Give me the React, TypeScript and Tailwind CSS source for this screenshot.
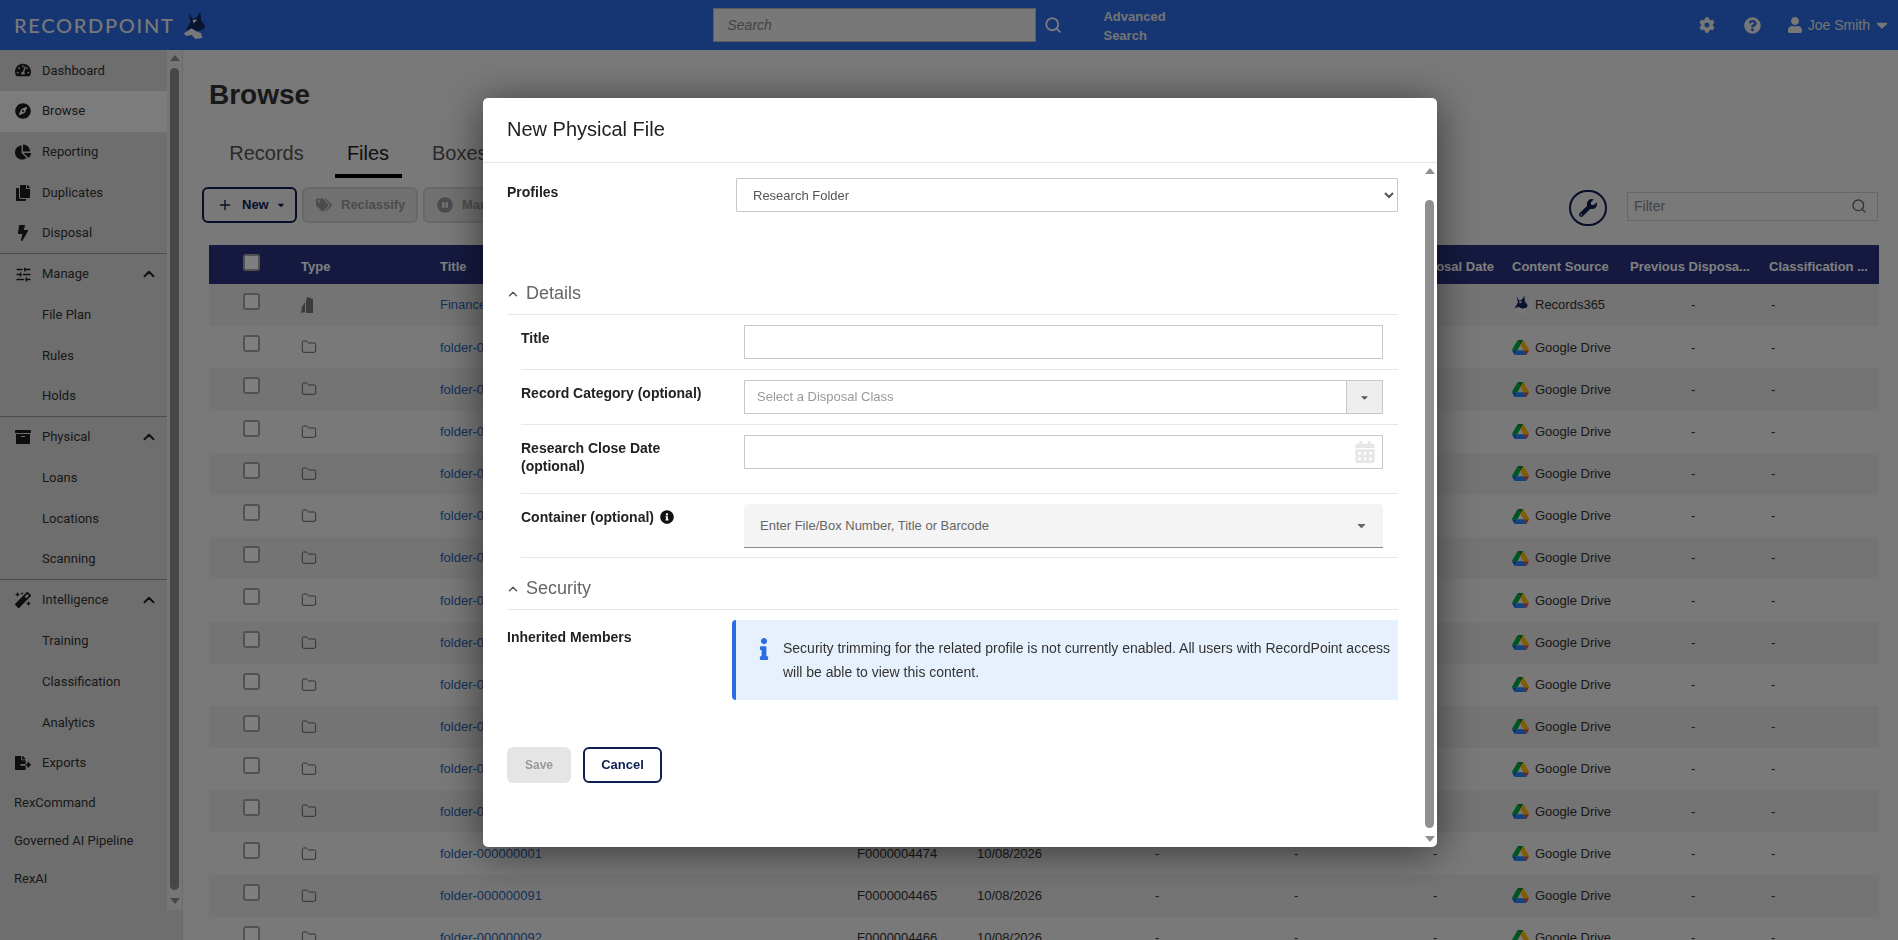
import { ChevronUp, Folder, Plus, Search, SlidersHorizontal } from 'lucide-react';
import {
  FaArchive,
  FaBolt,
  FaCalendarAlt,
  FaCaretDown,
  FaChartPie,
  FaCog,
  FaCompass,
  FaCopy,
  FaFileExport,
  FaInfo,
  FaInfoCircle,
  FaMagic,
  FaPauseCircle,
  FaQuestionCircle,
  FaTachometerAlt,
  FaTags,
  FaUser,
  FaWrench,
} from 'react-icons/fa';
import type { ReactNode } from 'react';

const ARIAL = "font-['Liberation_Sans',Arial,sans-serif]";

const rows = [
  { title: 'Finance Documents', num: 'F0000004480', source: 'Records365' },
  ...[82, 83, 84, 85, 86, 87, 88, 89, 90, 93, 94, 95, 1, 91, 92].map((n, i) => ({
    title: `folder-${String(n).padStart(9, '0')}`,
    num:
      n === 1
        ? 'F0000004474'
        : n === 91
          ? 'F0000004465'
          : n === 92
            ? 'F0000004466'
            : `F00000044${50 + i}`,
    source: 'Google Drive',
  })),
];

function FoxLogo({ className }: { className?: string }) {
  return (
    <svg viewBox="0 0 24 28" className={className}>
      <path d="M6 1L10 7L14 6L18 0L19 9L23 14L22 18L14 20L9 17L3 19L8 10Z" fill="#12285f" />
      <path d="M10 8L15 8L11 12Z" fill="#f0f0f0" />
      <path d="M1 22L9 17L14 20L19 22L20 27L13 28L9 24L3 25Z" fill="#f0f0f0" />
    </svg>
  );
}

function DriveIcon() {
  return (
    <svg viewBox="0 0 87.3 78" className="h-[15px] w-[17px] shrink-0">
      <path d="m6.6 66.85 3.85 6.65c.8 1.4 1.95 2.5 3.3 3.3l13.75-23.8h-27.5c0 1.55.4 3.1 1.2 4.5z" fill="#0066da" />
      <path d="m43.65 25-13.75-23.8c-1.35.8-2.5 1.9-3.3 3.3l-25.4 44a9.06 9.06 0 0 0 -1.2 4.5h27.5z" fill="#00ac47" />
      <path d="m73.55 76.8c1.35-.8 2.5-1.9 3.3-3.3l1.6-2.75 7.65-13.25c.8-1.4 1.2-2.95 1.2-4.5h-27.502l5.852 11.5z" fill="#ea4335" />
      <path d="m43.65 25 13.75-23.8c-1.35-.8-2.9-1.2-4.5-1.2h-18.5c-1.6 0-3.15.45-4.5 1.2z" fill="#00832d" />
      <path d="m59.8 53h-32.3l-13.75 23.8c1.35.8 2.9 1.2 4.5 1.2h50.8c1.6 0 3.15-.45 4.5-1.2z" fill="#2684fc" />
      <path d="m73.4 26.5-12.7-22c-.8-1.4-1.95-2.5-3.3-3.3l-13.75 23.8 16.15 28h27.45c0-1.55-.4-3.1-1.2-4.5z" fill="#ffba00" />
    </svg>
  );
}

function NavItem({
  icon,
  label,
  active,
  open,
  divider,
}: {
  icon?: ReactNode;
  label: string;
  active?: boolean;
  open?: boolean;
  divider?: boolean;
}) {
  return (
    <div
      className={`relative flex h-[40.75px] shrink-0 items-center pl-[42px] text-[13px] text-[#333] ${
        active ? 'bg-[#f8f8f8]' : ''
      } ${divider ? 'border-b border-[#999]' : ''}`}
    >
      {icon && <span className="absolute left-[14px] flex w-[18px] justify-center text-[16px] text-[#1c1c1c]">{icon}</span>}
      <span>{label}</span>
      {open && <ChevronUp className="absolute left-[140px] h-[18px] w-[18px] text-[#222]" strokeWidth={2.5} />}
    </div>
  );
}

function Sidebar() {
  return (
    <aside className="flex w-[183px] shrink-0 border-r border-[#d8d8d8] bg-[#dcdcdc] font-['Roboto',sans-serif]">
      <nav className="flex w-[167px] shrink-0 flex-col">
        <NavItem icon={<FaTachometerAlt />} label="Dashboard" />
        <NavItem icon={<FaCompass />} label="Browse" active />
        <NavItem icon={<FaChartPie />} label="Reporting" />
        <NavItem icon={<FaCopy />} label="Duplicates" />
        <NavItem icon={<FaBolt />} label="Disposal" divider />
        <NavItem icon={<SlidersHorizontal className="h-[17px] w-[17px]" strokeWidth={2} />} label="Manage" open />
        <NavItem label="File Plan" />
        <NavItem label="Rules" />
        <NavItem label="Holds" divider />
        <NavItem icon={<FaArchive />} label="Physical" open />
        <NavItem label="Loans" />
        <NavItem label="Locations" />
        <NavItem label="Scanning" divider />
        <NavItem icon={<FaMagic />} label="Intelligence" open />
        <NavItem label="Training" />
        <NavItem label="Classification" />
        <NavItem label="Analytics" />
        <NavItem icon={<FaFileExport />} label="Exports" />
        <div className="flex h-[38.2px] items-center pl-[14px] text-[13px] text-[#333]">RexCommand</div>
        <div className="flex h-[38.2px] items-center pl-[14px] text-[13px] text-[#333]">Governed AI Pipeline</div>
        <div className="flex h-[38.2px] items-center pl-[14px] text-[13px] text-[#333]">RexAI</div>
      </nav>
      <div className="flex h-[860px] w-[15px] shrink-0 flex-col items-center bg-[#ececec] pt-[5px]">
        <span className="h-0 w-0 border-x-[5px] border-b-[6px] border-x-transparent border-b-[#8f8f8f]" />
        <span className="mt-[7px] h-[822px] w-[9px] rounded-full bg-[#8f8f8f]" />
        <span className="mt-[8px] h-0 w-0 border-x-[5px] border-t-[6px] border-x-transparent border-t-[#8f8f8f]" />
      </div>
    </aside>
  );
}

function Checkbox({ className }: { className?: string }) {
  return <span className={`block h-[17px] w-[17px] rounded-[3px] border-2 border-[#a5a5a5] ${className ?? ''}`} />;
}

function Table() {
  return (
    <div className={`ml-[26px] mt-[22px] w-[1670px] text-[13px] text-[#333] ${ARIAL}`}>
      <div className="flex h-[39px] items-center bg-[#2a3380] font-bold text-white">
        <div className="w-[92px] pl-[34px]">
          <Checkbox className="-mt-[5px] border-[#999] bg-white" />
        </div>
        <div className="mt-[4px] w-[139px]">Type</div>
        <div className="mt-[4px] w-[968px]">Title</div>
        <div className="mt-[4px] w-[104px]">Disposal Date</div>
        <div className="mt-[4px] w-[118px]">Content Source</div>
        <div className="mt-[4px] w-[139px]">Previous Disposa...</div>
        <div className="mt-[4px]">Classification ...</div>
      </div>
      {rows.map((row, i) => (
        <div key={row.title} className={`flex h-[42.2px] items-center ${i % 2 === 0 ? 'bg-[#e8e8e8]' : ''}`}>
          <div className="w-[92px] pl-[34px]">
            <Checkbox className="-mt-[7px] bg-white" />
          </div>
          <div className="w-[139px]">
            {row.source === 'Records365' ? (
              <svg viewBox="0 0 14 16" className="h-[16px] w-[14px] text-[#777]" fill="currentColor">
                <path d="M6 0l6 2v14H5V4z" />
                <path d="M4 5v10l-4 1 1-6z" />
              </svg>
            ) : (
              <Folder className="h-[16px] w-[16px] text-[#666]" strokeWidth={1.5} />
            )}
          </div>
          <div className="w-[417px] whitespace-nowrap text-[#2a62b4]">{row.title}</div>
          <div className="w-[120px]">{row.num}</div>
          <div className="w-[178px]">10/08/2026</div>
          <div className="w-[139px]">-</div>
          <div className="w-[139px]">-</div>
          <div className="w-[79px]">-</div>
          <div className="flex w-[179px] items-center gap-[6px]">
            {row.source === 'Records365' ? <FoxLogo className="h-[18px] w-[17px] shrink-0" /> : <DriveIcon />}
            <span>{row.source}</span>
          </div>
          <div className="w-[80px]">-</div>
          <div>-</div>
        </div>
      ))}
    </div>
  );
}

function MainContent() {
  return (
    <main className={`min-w-0 flex-1 overflow-hidden bg-[#f2f2f2] ${ARIAL}`}>
      <h1 className="ml-[26px] mt-[27px] text-[28px] font-bold leading-[36px] text-[#333]">Browse</h1>
      <div className="ml-[26px] mt-[15px] flex h-[50px] items-center text-[20px] text-[#555]">
        <div className="flex h-full w-[115px] items-center justify-center">Records</div>
        <div className="relative flex h-full w-[88px] items-center justify-center text-[#222]">
          Files
          <span className="absolute bottom-0 left-[11px] right-[10px] h-[4px] bg-black" />
        </div>
        <div className="ml-[20px]">Boxes</div>
      </div>
      <div className="ml-[19px] mt-[9px] flex h-[36px] items-center gap-[5px] text-[13px] font-bold">
        <div className="flex h-[36px] w-[95px] items-center rounded-[6px] border-2 border-[#0e1f50] pl-[13px] text-[#0e1f50]">
          <Plus className="h-[16px] w-[16px]" strokeWidth={2} />
          <span className="ml-[9px]">New</span>
          <FaCaretDown className="ml-[8px] h-[10px] w-[8px]" />
        </div>
        <div className="flex h-[36px] w-[116px] items-center rounded-[6px] border-2 border-[#d0d0d0] bg-[#e2e2e2] pl-[12px] text-[#999]">
          <FaTags className="h-[16px] w-[16px]" />
          <span className="ml-[9px]">Reclassify</span>
        </div>
        <div className="flex h-[36px] w-[116px] items-center rounded-[6px] border-2 border-[#d0d0d0] bg-[#e2e2e2] pl-[12px] text-[#999]">
          <FaPauseCircle className="h-[16px] w-[16px]" />
          <span className="ml-[9px]">Manage</span>
        </div>
        <div className="ml-auto mr-[20px] flex w-[309px] items-center">
          <div className="mt-[5px] flex h-[36px] w-[38px] items-center justify-center rounded-full border-2 border-[#0e1f50]">
            <FaWrench className="h-[18px] w-[18px] text-[#0e1f50]" />
          </div>
          <div className="ml-[20px] mt-[2px] flex h-[29px] w-[251px] items-center justify-between border border-[#cfcfcf] pl-[6px] pr-[10px] text-[14px] font-normal text-[#888]">
            Filter
            <Search className="h-[16px] w-[16px] text-[#666]" strokeWidth={2} />
          </div>
        </div>
      </div>
      <Table />
    </main>
  );
}

function FieldRow({ label, children, info }: { label: ReactNode; children: ReactNode; info?: boolean }) {
  return (
    <div className="ml-[14px] flex border-b border-[#e6e6ea] pt-[10px]">
      <div className="flex w-[223px] shrink-0 items-start pt-[4px] text-[14px] font-bold leading-[18px] text-[#222]">
        <span>{label}</span>
        {info && <FaInfoCircle className="ml-[6px] mt-[2px] h-[14px] w-[14px] text-[#111]" />}
      </div>
      <div className="flex-1 pr-[15px]">{children}</div>
    </div>
  );
}

function SectionTitle({ title }: { title: string }) {
  return (
    <div className="flex h-[35px] items-center border-b border-[#e6e6ea] pb-[7px] text-[18px] text-[#666]">
      <ChevronUp className="-ml-[1px] h-[14px] w-[14px] text-[#555]" strokeWidth={2.5} />
      <span className="ml-[6px]">{title}</span>
    </div>
  );
}

function Modal() {
  return (
    <div className="fixed inset-0 flex items-start bg-black/50">
      <div className={`ml-[483px] mt-[98px] flex h-[749px] w-[954px] flex-col rounded-[5px] bg-white shadow-[0_5px_40px_rgba(0,0,0,0.55)] ${ARIAL}`}>
        <div className="flex h-[65px] shrink-0 items-center border-b border-[#e6e6e6] pb-[2px] pl-[24px] text-[20px] text-[#222]">
          New Physical File
        </div>
        <div className="flex min-h-0 flex-1">
          <form className="min-w-0 flex-1 pl-[24px] pr-[27px]">
            <div className="flex pt-[15px]">
              <label className="w-[229px] shrink-0 pt-[5px] text-[14px] font-bold leading-[18px] text-[#222]">Profiles</label>
              <select
                defaultValue="Research Folder"
                className="h-[34px] flex-1 rounded-[1px] border border-[#c8c8c8] pl-[12px] text-[13px] text-[#555]"
              >
                <option>Research Folder</option>
              </select>
            </div>
            <div className="mt-[68px]">
              <SectionTitle title="Details" />
            </div>
            <FieldRow label="Title">
              <div className="mb-[10px] h-[34px] border border-[#c8c8c8]" />
            </FieldRow>
            <FieldRow label="Record Category (optional)">
              <div className="mb-[10px] flex h-[34px] items-center border border-[#c8c8c8] pl-[12px] text-[13px] text-[#999]">
                <span className="flex-1">Select a Disposal Class</span>
                <span className="flex h-full w-[36px] items-center justify-center border-l border-[#c8c8c8] bg-[#eeeeee] text-[#555]">
                  <FaCaretDown className="h-[11px] w-[11px]" />
                </span>
              </div>
            </FieldRow>
            <FieldRow label={<>Research Close Date<br />(optional)</>}>
              <div className="mb-[24px] flex h-[34px] items-center justify-end border border-[#c8c8c8] pr-[7px]">
                <FaCalendarAlt className="h-[22px] w-[20px] text-[#e6e6e6]" />
              </div>
            </FieldRow>
            <FieldRow label="Container (optional)" info>
              <div className="mb-[9px] flex h-[44px] items-center justify-between rounded-t-[4px] border-b border-[#8a8a8a] bg-[#f4f4f4] pl-[16px] pr-[15px] text-[13px] text-[#666]">
                Enter File/Box Number, Title or Barcode
                <FaCaretDown className="h-[13px] w-[13px] text-[#666]" />
              </div>
            </FieldRow>
            <div className="mt-[17px]">
              <SectionTitle title="Security" />
            </div>
            <div className="flex pt-[10px]">
              <div className="w-[225px] shrink-0 pt-[8px] text-[14px] font-bold leading-[18px] text-[#222]">Inherited Members</div>
              <div className="flex h-[80px] flex-1 rounded-l-[4px] border-l-[4px] border-[#2b6ce4] bg-[#e7f1fe] pl-[23px] pt-[16px]">
                <FaInfo className="mt-[2px] h-[22px] w-[10px] shrink-0 text-[#2b6ce4]" />
                <p className="ml-[14px] text-[14px] leading-[24px] text-[#333]">
                  Security trimming for the related profile is not currently enabled. All users with RecordPoint access will be able to view this content.
                </p>
              </div>
            </div>
            <div className="mt-[47px] flex gap-[12px] text-[13px] font-bold">
              <button type="button" className="h-[36px] w-[64px] rounded-[6px] bg-[#e5e5e5] text-[12px] text-[#999]">Save</button>
              <button type="button" className="h-[36px] w-[79px] rounded-[6px] border-2 border-[#0e1f50] text-[#0e1f50]">Cancel</button>
            </div>
          </form>
          <div className="mr-[3px] flex w-[9px] shrink-0 flex-col items-center pt-[5px]">
            <span className="h-0 w-0 border-x-[5px] border-b-[6px] border-x-transparent border-b-[#8f8f8f]" />
            <span className="mt-[26px] h-[628px] w-[9px] rounded-full bg-[#8f8f8f]" />
            <span className="mt-[8px] h-0 w-0 border-x-[5px] border-t-[6px] border-x-transparent border-t-[#8f8f8f]" />
          </div>
        </div>
      </div>
    </div>
  );
}

export default function App() {
  return (
    <div className="flex h-[940px] w-[1898px] flex-col overflow-hidden">
      <header className={`flex h-[50px] shrink-0 items-center bg-[#2a6ce4] text-white ${ARIAL}`}>
        <span className="ml-[14px] font-['Lato',sans-serif] text-[20px] font-medium tracking-[1.7px] text-[#f0f0f0]">RECORDPOINT</span>
        <FoxLogo className="ml-[9px] h-[27px] w-[23px]" />
        <div className="ml-[507px] flex h-[34px] w-[323px] items-center border border-[#bbb] bg-[#f0f0f0] pl-[13px] text-[14px] italic text-[#888]">
          Search
        </div>
        <Search className="ml-[8px] h-[18px] w-[18px] text-white/90" strokeWidth={2.5} />
        <div className="ml-[41px] mt-[2px] text-[13px] font-bold leading-[19px] text-[#e8e8e8]">
          Advanced
          <br />
          Search
        </div>
        <FaCog className="ml-auto h-[16px] w-[16px] text-[#eee]" />
        <FaQuestionCircle className="ml-[29px] h-[17px] w-[17px] text-[#eee]" />
        <FaUser className="ml-[26px] h-[16px] w-[16px] text-[#eee]" />
        <span className="ml-[5px] text-[14px] text-[#e8e8e8]">Joe Smith</span>
        <FaCaretDown className="ml-[6px] mr-[10px] h-[18px] w-[12px] text-[#eee]" />
      </header>
      <div className="flex min-h-0 flex-1">
        <Sidebar />
        <MainContent />
      </div>
      <Modal />
    </div>
  );
}
